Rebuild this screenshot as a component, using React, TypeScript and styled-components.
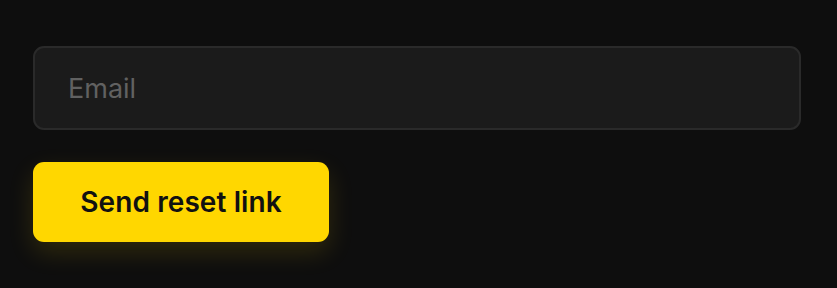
import styled, { createGlobalStyle } from "styled-components";

const GlobalStyle = createGlobalStyle`
  html, body {
    margin: 0;
    padding: 0;
    background: #0e0e0e;
    font-family: Inter, "Noto Sans", sans-serif;
  }
`;

const Page = styled.div`
  width: 837px;
  height: 288px;
  box-sizing: border-box;
  padding: 46px 36px 0 33px;
  display: flex;
  flex-direction: column;
  align-items: flex-start;
  gap: 32px;
`;

const EmailInput = styled.input`
  width: 768px;
  height: 84px;
  box-sizing: border-box;
  background: #1b1b1b;
  border: 2px solid #2a2a2a;
  border-radius: 11px;
  padding: 0 33px;
  font-family: Inter, "Noto Sans", sans-serif;
  font-size: 27px;
  color: #e6e6e6;
  outline: none;

  &::placeholder {
    color: #616161;
  }
`;

const SubmitButton = styled.button`
  width: 296px;
  height: 80px;
  border: none;
  border-radius: 11px;
  background: #ffd700;
  color: #111;
  font-family: Inter, "Noto Sans", sans-serif;
  font-size: 28px;
  font-weight: 600;
  letter-spacing: 0.1px;
  cursor: pointer;
  box-shadow: 0 10px 26px rgba(255, 215, 0, 0.14);
`;

const App = () => {
  return (
    <>
      <GlobalStyle />
      <Page>
        <EmailInput type="email" placeholder="Email" />
        <SubmitButton>Send reset link</SubmitButton>
      </Page>
    </>
  );
};

export default App;
